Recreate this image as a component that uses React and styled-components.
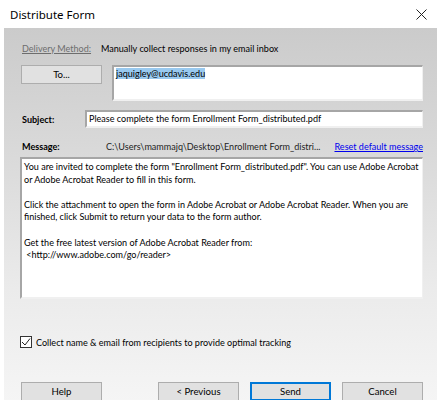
import React from "react";
import styled, { createGlobalStyle } from "styled-components";

const Global = createGlobalStyle`
  html, body { margin: 0; padding: 0; background: #ffffff; }
  body { font-family: Lato, "Liberation Sans", sans-serif; color: #000; }
  * { box-sizing: border-box; }
`;

const Window = styled.div`
  width: 437px;
  height: 400px;
  overflow: hidden;
  display: flex;
  flex-direction: column;
  background: #ffffff;
`;

const TitleBar = styled.div`
  height: 28px;
  flex: none;
  display: flex;
  align-items: center;
  justify-content: space-between;
  padding: 0 8px 0 10px;
  font-family: "Noto Sans", sans-serif;
  font-size: 11.5px;
  color: #000;
`;

const CloseGlyph = styled.svg`
  width: 11px;
  height: 11px;
  margin-right: 2px;
`;

const Body = styled.div`
  flex: 1;
  margin-left: 4px;
  padding: 13px 14px 0 17px;
  background: linear-gradient(#cbcbcb 0%, #dadada 35%, #ebebeb 70%, #f5f5f5 100%);
  display: flex;
  flex-direction: column;
  font-size: 9.05px;
`;

const DeliveryRow = styled.div`
  display: flex;
  align-items: center;
  height: 14px;
`;

const MutedLink = styled.span`
  color: #6d6d6d;
  text-decoration: underline;
  width: 80px;
  flex: none;
  padding-left: 1px;
`;

const ToRow = styled.div`
  display: flex;
  margin-top: 10px;
  gap: 10px;
`;

const Button = styled.button`
  font: inherit;
  font-size: 9.6px;
  width: ${(p) => p.$w || 81}px;
  height: 19px;
  flex: none;
  background: #e1e1e1;
  border: 1px solid ${(p) => (p.$primary ? "#0078d7" : "#adadad")};
  box-shadow: ${(p) => (p.$primary ? "inset 0 0 0 1px #0078d7" : "none")};
  color: #000;
  padding: 0;
  display: flex;
  align-items: center;
  justify-content: center;
`;

const Field = styled.div`
  background: #ffffff;
  border-style: solid;
  border-width: 2px 1px 2px 2px;
  border-color: #a6a6a6 #f0f0f0 #f0f0f0 #a6a6a6;
  height: ${(p) => p.$h}px;
  flex: ${(p) => (p.$grow ? 1 : "none")};
  padding: ${(p) => p.$pad || "1px 2px"};
  overflow: hidden;
  white-space: ${(p) => (p.$wrap ? "normal" : "nowrap")};
`;

const Selected = styled.span`
  background: #99c9ef;
`;

const SubjectRow = styled.div`
  display: flex;
  align-items: center;
  margin-top: 9px;
`;

const Label = styled.span`
  font-weight: 700;
  width: ${(p) => p.$w}px;
  flex: none;
  padding-left: 1px;
`;

const MessageRow = styled.div`
  display: flex;
  align-items: center;
  margin-top: 12px;
  height: 13px;
  white-space: nowrap;
`;

const PathText = styled.span`
  flex: 1;
  color: #222;
`;

const Link = styled.span`
  color: #0000ee;
  text-decoration: underline;
`;

const MessageBox = styled(Field)`
  margin-top: 4px;
  margin-left: -1px;
  line-height: 12.6px;
  padding: 2px 2px;
`;

const Para = styled.p`
  margin: 0 0 12.6px 0;
`;

const CheckRow = styled.label`
  display: flex;
  align-items: center;
  gap: 4px;
  margin-top: 37px;
  margin-left: -1px;
`;

const Box = styled.span`
  width: 12px;
  height: 12px;
  border: 1px solid #333;
  background: #fff;
  display: flex;
  align-items: center;
  justify-content: center;
`;

const ButtonBar = styled.div`
  display: flex;
  justify-content: space-between;
  margin-top: 34px;
`;

const ButtonGroup = styled.div`
  display: flex;
  gap: 11px;
`;

export default function App() {
  return (
    <>
      <Global />
      <Window>
        <TitleBar>
          <span>Distribute Form</span>
          <CloseGlyph viewBox="0 0 11 11">
            <path d="M0.5 0.5 L10.5 10.5 M10.5 0.5 L0.5 10.5" stroke="#222" strokeWidth="1" fill="none" />
          </CloseGlyph>
        </TitleBar>
        <Body>
          <DeliveryRow>
            <MutedLink>Delivery Method:</MutedLink>
            <span>Manually collect responses in my email inbox</span>
          </DeliveryRow>
          <ToRow>
            <Button $w={81}>To...</Button>
            <Field $h={36} $grow>
              <Selected>jaquigley@ucdavis.edu</Selected>
            </Field>
          </ToRow>
          <SubjectRow>
            <Label $w={64}>Subject:</Label>
            <Field $h={18} $grow>
              Please complete the form Enrollment Form_distributed.pdf
            </Field>
          </SubjectRow>
          <MessageRow>
            <Label $w={85}>Message:</Label>
            <PathText>C:\Users\mammajq\Desktop\Enrollment Form_distri...</PathText>
            <Link>Reset default message</Link>
          </MessageRow>
          <MessageBox $h={142} $wrap>
            <Para>
              You are invited to complete the form "Enrollment Form_distributed.pdf". You can use Adobe Acrobat or
              Adobe Acrobat Reader to fill in this form.
            </Para>
            <Para>
              Click the attachment to open the form in Adobe Acrobat or Adobe Acrobat Reader. When you are
              finished, click Submit to return your data to the form author.
            </Para>
            <Para>
              Get the free latest version of Adobe Acrobat Reader from:
              <br />
              &nbsp;&lt;http://www.adobe.com/go/reader&gt;
            </Para>
          </MessageBox>
          <CheckRow>
            <Box>
              <svg width="10" height="10" viewBox="0 0 10 10">
                <path d="M1 5 L4 8 L9 1.5" stroke="#222" strokeWidth="1" fill="none" />
              </svg>
            </Box>
            <span>Collect name &amp; email from recipients to provide optimal tracking</span>
          </CheckRow>
          <ButtonBar>
            <Button $w={81}>Help</Button>
            <ButtonGroup>
              <Button $w={81}>&lt; Previous</Button>
              <Button $w={81} $primary>Send</Button>
              <Button $w={81}>Cancel</Button>
            </ButtonGroup>
          </ButtonBar>
        </Body>
      </Window>
    </>
  );
}
